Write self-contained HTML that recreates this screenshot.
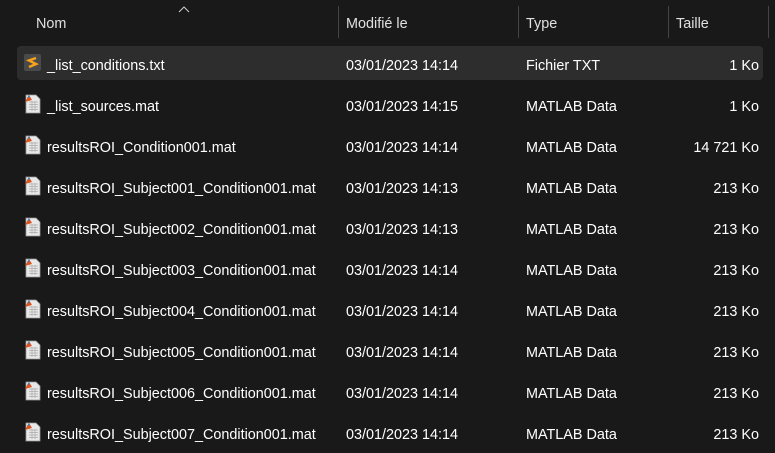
<!DOCTYPE html>
<html><head><style>
body{margin:0;width:775px;height:453px;background:#191919;overflow:hidden;font-family:"Segoe UI","Liberation Sans",sans-serif;font-size:14.4px;color:#fff;position:relative}
.h{position:absolute;top:16px;color:#e0e0e0;font-size:14.4px}
.sep{position:absolute;top:6px;width:1px;height:32px;background:#444}
.row{position:absolute;left:17px;width:746px;height:34px}
.sel{background:#2d2d2d;border-radius:4px}
.c{position:absolute;top:12px;white-space:nowrap}
.ic{position:absolute;left:7px;top:7px;width:17px;height:20px}
</style></head><body>
<div class="h" style="left:36px">Nom</div>
<svg style="position:absolute;left:178px;top:6px" width="12" height="7"><path d="M1 6 L6 1 L11 6" stroke="#ccc" fill="none"/></svg>
<div class="sep" style="left:338px"></div>
<div class="h" style="left:346px">Modifié le</div>
<div class="sep" style="left:518px"></div>
<div class="h" style="left:526px">Type</div>
<div class="sep" style="left:668px"></div>
<div class="h" style="left:676px">Taille</div>
<div class="sep" style="left:768px"></div>

<div class="row sel" style="top:46px">
<svg class="ic" viewBox="0 0 17 20"><rect x="0" y="1" width="17" height="17" rx="2" fill="#4a4a4a"/><path d="M12 5 L5 7.5 L12 11 L5 14" stroke="#f7a21b" stroke-width="2.5" fill="none"/></svg>
<div class="c" style="left:30px">_list_conditions.txt</div><div class="c" style="left:329px">03/01/2023 14:14</div><div class="c" style="left:509px">Fichier TXT</div><div class="c" style="right:4px">1 Ko</div></div>

<script>
const r=[["_list_sources.mat","14:15","1 Ko"],["resultsROI_Condition001.mat","14:14","14 721 Ko"],["resultsROI_Subject001_Condition001.mat","14:13","213 Ko"],["resultsROI_Subject002_Condition001.mat","14:13","213 Ko"],["resultsROI_Subject003_Condition001.mat","14:14","213 Ko"],["resultsROI_Subject004_Condition001.mat","14:14","213 Ko"],["resultsROI_Subject005_Condition001.mat","14:14","213 Ko"],["resultsROI_Subject006_Condition001.mat","14:14","213 Ko"],["resultsROI_Subject007_Condition001.mat","14:14","213 Ko"]];
r.forEach((x,i)=>{document.write(`<div class="row" style="top:${87+i*41}px"><svg class="ic" viewBox="0 0 17 20"><path d="M2 1 H12 L16 5 V19 H2 Z" fill="#e8e8e8" stroke="#999" stroke-width="0.8"/><path d="M5 8H14M5 10.5H14M5 13H14M5 15.5H14M8 7V17M11 7V17" stroke="#aaa" stroke-width="0.7"/><path d="M1 8 L5 1 L8 6 Z" fill="#d9541e"/><path d="M3 4 L5 1 L6 3Z" fill="#3a7fc0"/></svg><div class="c" style="left:30px">${x[0]}</div><div class="c" style="left:329px">03/01/2023 ${x[1]}</div><div class="c" style="left:509px">MATLAB Data</div><div class="c" style="right:4px">${x[2]}</div></div>`)});
</script>
</body></html>
